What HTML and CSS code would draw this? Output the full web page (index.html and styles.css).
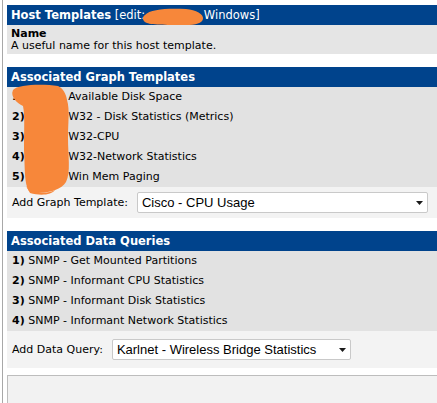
FILE: index.html
```html
<!DOCTYPE html>
<html>
<head>
<meta charset="utf-8">
<title>Host Templates</title>
<link rel="stylesheet" href="styles.css">
</head>
<body>
<div class="page">
  <section class="panel">
    <div class="head"><b>Host Templates</b> [edit: <span class="redacted"></span>Windows]</div>
    <div class="name-row"><b>Name</b><br>A useful name for this host template.</div>
  </section>

  <section class="panel">
    <div class="head"><b>Associated Graph Templates</b></div>
    <div class="item"><b>1)</b> <span class="redacted"></span>Available Disk Space</div>
    <div class="item"><b>2)</b> <span class="redacted"></span>W32 - Disk Statistics (Metrics)</div>
    <div class="item"><b>3)</b> <span class="redacted"></span>W32-CPU</div>
    <div class="item"><b>4)</b> <span class="redacted"></span>W32-Network Statistics</div>
    <div class="item"><b>5)</b> <span class="redacted"></span>Win Mem Paging</div>
    <div class="add add-graph">
      <span class="label">Add Graph Template:</span>
      <div class="select select-graph">
        <select><option>Cisco - CPU Usage</option></select>
        <svg class="arrow" width="7" height="4" viewBox="0 0 7 4"><polygon points="0,0 7,0 3.5,4" fill="#1a1a1a"/></svg>
      </div>
    </div>
  </section>

  <section class="panel last">
    <div class="head"><b>Associated Data Queries</b></div>
    <div class="item"><b>1)</b> SNMP - Get Mounted Partitions</div>
    <div class="item"><b>2)</b> SNMP - Informant CPU Statistics</div>
    <div class="item"><b>3)</b> SNMP - Informant Disk Statistics</div>
    <div class="item"><b>4)</b> SNMP - Informant Network Statistics</div>
    <div class="add add-query">
      <span class="label">Add Data Query:</span>
      <div class="select select-query">
        <select><option>Karlnet - Wireless Bridge Statistics</option></select>
        <svg class="arrow" width="7" height="4" viewBox="0 0 7 4"><polygon points="0,0 7,0 3.5,4" fill="#1a1a1a"/></svg>
      </div>
    </div>
  </section>

  <div class="footer-box"></div>
</div>

<svg class="scribble" width="437" height="403" viewBox="0 0 437 403">
  <path fill="#f7873a" d="M145,15 C150,9 168,8 186,9 C196,10 204,14 203,19 C202,23 196,25 186,25 C170,25 152,25 147,23 C142,21 142,17 145,15 Z"/>
  <path fill="#f7873a" d="M13,90 C18,84 44,84 58,86 C63,88 66,94 67,100 C70,110 68,122 68,138 C68,156 71,172 66,182 C60,192 40,195 29,191 C24,184 25,168 24,150 C24,130 25,115 23,106 C17,103 10,97 13,90 Z"/>
  <path fill="#f7873a" d="M26,186 C32,192 45,195 55,190 C52,195 40,196 30,193 Z"/>
</svg>
</body>
</html>
```

FILE: styles.css
```css
* {
  box-sizing: border-box;
}

html,
body {
  margin: 0;
  padding: 0;
}

body {
  width: 437px;
  height: 403px;
  overflow: hidden;
  position: relative;
  background: #ffffff;
  color: #000000;
  font-family: "DejaVu Sans", Verdana, sans-serif;
}

.page {
  margin-left: 2px;
  border-left: 1px solid #a8a8a8;
  padding: 5px 0 0 4px;
  width: 450px;
  height: 403px;
  overflow: hidden;
}

.panel {
  margin-bottom: 13px;
}

.panel.last {
  margin-bottom: 7px;
}

.head {
  background: #00438c;
  color: #ffffff;
  font-size: 11.5px;
  height: 20px;
  line-height: 20px;
  padding-left: 4px;
  white-space: nowrap;
}

.redacted {
  display: inline-block;
  width: 40px;
  height: 1px;
}

.head .redacted {
  width: 55px;
}

.name-row {
  background: #e5e5e5;
  font-size: 11px;
  line-height: 12px;
  height: 29px;
  padding: 3px 4px 2px;
  white-space: nowrap;
}

.item {
  background: #e2e2e2;
  font-size: 11px;
  height: 20px;
  line-height: 20px;
  padding-left: 5px;
  white-space: nowrap;
}

.add {
  background: #f3f3f3;
  display: flex;
  align-items: center;
  padding-left: 5px;
  font-size: 11px;
  white-space: nowrap;
}

.add-graph {
  height: 31px;
}

.add-query {
  height: 37px;
}

.select {
  position: relative;
  margin-left: 9px;
}

.select select {
  appearance: none;
  -webkit-appearance: none;
  display: block;
  font-family: "Liberation Sans", Arial, sans-serif;
  font-size: 13px;
  height: 21px;
  border: 1px solid #c9c9c9;
  border-radius: 2px;
  background: #ffffff;
  color: #000000;
  padding: 0 0 0 4px;
  margin: 0;
  outline: none;
}

.select-graph select {
  width: 291px;
}

.select-query select {
  width: 239px;
}

.arrow {
  position: absolute;
  right: 5px;
  top: 9px;
  pointer-events: none;
}

.footer-box {
  border: 1px solid #bdbdbd;
  background: #f2f2f2;
  height: 60px;
}

.scribble {
  position: absolute;
  left: 0;
  top: 0;
  pointer-events: none;
}
```
